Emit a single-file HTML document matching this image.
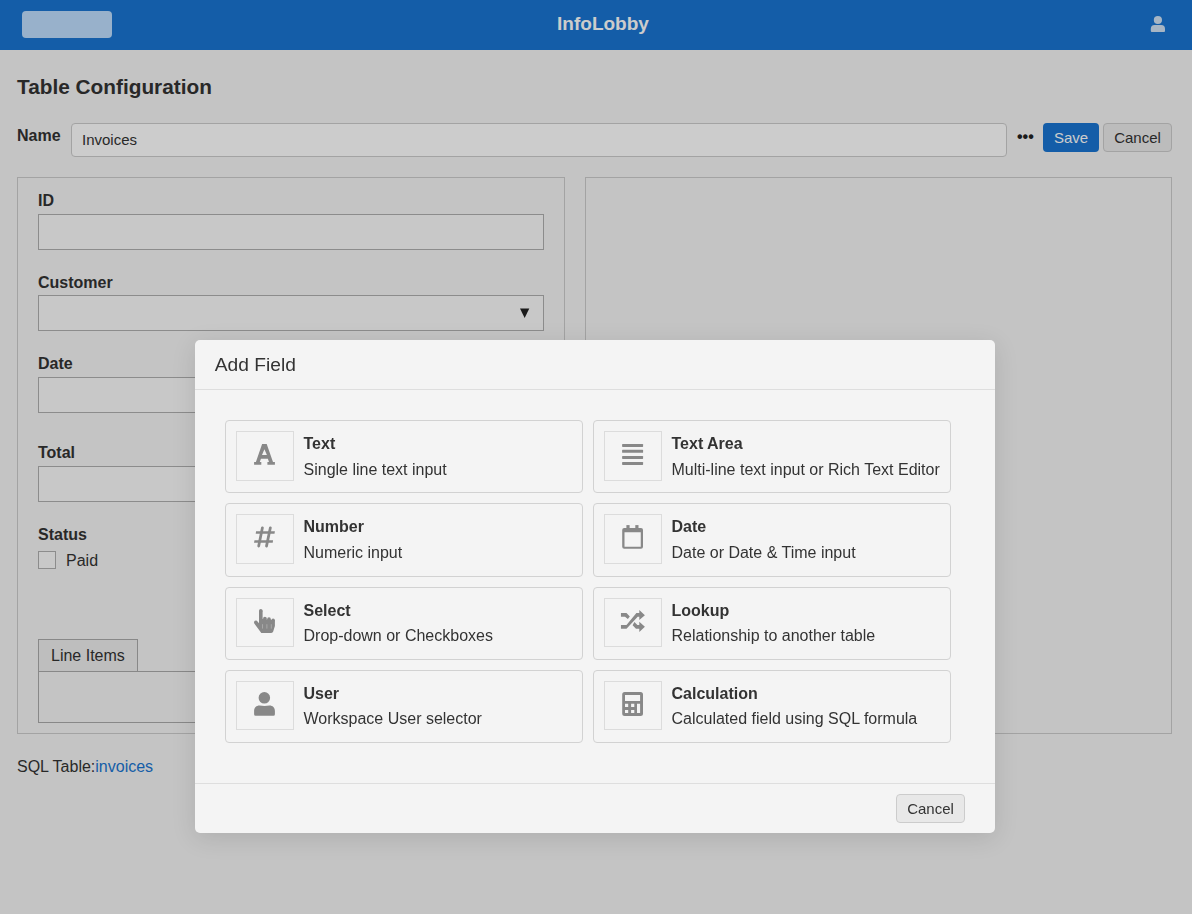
<!DOCTYPE html>
<html><head><meta charset="utf-8">
<style>
*{box-sizing:border-box;}
html,body{margin:0;padding:0;width:1192px;height:914px;overflow:hidden;}
body{font-family:"Liberation Sans",sans-serif;color:#333;background:#f5f5f5;position:relative;font-size:16px;}
.abs{position:absolute;}
#hdr{left:0;top:0;width:1192px;height:50px;background:#1975d2;}
#logo{left:22px;top:11px;width:90px;height:27px;border-radius:4px;background:#bedefe;}
#brand{left:0;top:0;width:1206px;text-align:center;line-height:47px;font-size:19px;font-weight:bold;color:#fff;}
#usr{left:1150px;top:15px;}
h1{position:absolute;left:17px;top:75px;margin:0;font-size:20.8px;font-weight:bold;line-height:24px;color:#333;}
.lbl{position:absolute;font-weight:bold;font-size:16px;line-height:18px;color:#333;}
.inp{position:absolute;border:1px solid #b0b0b0;background:#fbfbfb;}
#name{left:71px;top:123px;width:936px;height:34px;border-radius:4px;border-color:#ccc;background:#fff;}
#name span{position:absolute;left:10px;top:7px;font-size:15px;color:#333;}
#dots{left:1017px;top:128px;font-size:16px;font-weight:bold;color:#222;}
#save{left:1043px;top:123px;width:56px;height:29px;border-radius:4px;background:#1975d2;color:#fff;font-size:15px;text-align:center;line-height:29px;}
#cancel1{left:1103px;top:123px;width:69px;height:29px;border-radius:4px;background:#ebebeb;border:1px solid #ccc;color:#333;font-size:15px;text-align:center;line-height:27px;}
.panel{position:absolute;border:1px solid #ccc;}
#overlay{left:0;top:0;width:1192px;height:914px;background:rgba(0,0,0,0.2);}
#modal{will-change:transform;left:195px;top:340px;width:800px;height:493px;background:#f4f4f4;border-radius:5px;box-shadow:0 5px 24px rgba(0,0,0,.115);}
#mtitle{left:19.8px;top:14px;font-size:19.2px;line-height:22px;color:#333;}
#mhr1{left:0;top:49px;width:800px;height:1px;background:#dedede;}
#mhr2{left:0;top:443px;width:800px;height:1px;background:#dedede;}
.card{position:absolute;width:358px;height:73px;border:1px solid #d2d2d2;border-radius:4px;}
.ibox{position:absolute;left:10px;top:10px;width:58px;height:50px;border:1px solid #dcdcdc;}
.ibox svg{position:absolute;left:0;top:0;}
.ct{position:absolute;left:77.5px;top:14px;font-weight:bold;font-size:16px;line-height:18px;color:#333;}
.cd{position:absolute;left:77.5px;top:40px;font-size:16px;line-height:18px;color:#333;}
#mcancel{left:701px;top:454px;width:69px;height:29px;border-radius:4px;background:#e8e8e8;border:1px solid #ccc;font-size:15px;text-align:center;line-height:27px;color:#333;}
</style></head><body>
<div id="hdr" class="abs">
  <div id="logo" class="abs"></div>
  <div id="brand" class="abs">InfoLobby</div>
  <svg id="usr" class="abs" style="left:0;top:0" width="1192" height="50" viewBox="0 0 1192 50"><g fill="rgba(255,255,255,0.8)"><circle cx="1157.9" cy="20" r="4.1"/><path d="M1150.8,31 L1150.8,28.8 Q1150.8,24.9 1154.6,24.9 L1161.2,24.9 Q1165,24.9 1165,28.8 L1165,31 Q1165,32 1164,32 L1151.8,32 Q1150.8,32 1150.8,31 Z"/></g></svg>
</div>
<h1>Table Configuration</h1>
<div class="lbl" style="left:17px;top:127px;">Name</div>
<div id="name" class="inp"><span>Invoices</span></div>
<div id="dots" class="abs">&bull;&bull;&bull;</div>
<div id="save" class="abs">Save</div>
<div id="cancel1" class="abs">Cancel</div>

<div class="panel" style="left:17px;top:177px;width:548px;height:557px;">
</div>
<div class="panel" style="left:585px;top:177px;width:587px;height:557px;"></div>

<div class="lbl" style="left:38px;top:192px;">ID</div>
<div class="inp" style="left:38px;top:214px;width:506px;height:36px;"></div>
<div class="lbl" style="left:38px;top:274px;">Customer</div>
<div class="inp" style="left:38px;top:295px;width:506px;height:36px;"><svg class="abs" style="left:-1px;top:-1px;" width="506" height="36" viewBox="38 295 506 36"><path d="M520,308.6 L529.3,308.6 L524.65,318 Z" fill="#222"/></svg></div>
<div class="lbl" style="left:38px;top:355px;">Date</div>
<div class="inp" style="left:38px;top:377px;width:506px;height:36px;"></div>
<div class="lbl" style="left:38px;top:444px;">Total</div>
<div class="inp" style="left:38px;top:466px;width:506px;height:36px;"></div>
<div class="lbl" style="left:38px;top:526px;">Status</div>
<div class="inp" style="left:38px;top:551px;width:18px;height:18px;"></div>
<div class="abs" style="left:66px;top:552px;font-size:16px;line-height:18px;">Paid</div>
<div class="abs" style="left:38px;top:639px;width:100px;height:33px;border:1px solid #aaa;border-bottom:none;background:#eee;"><span class="abs" style="left:12px;top:7px;font-size:16px;line-height:18px;">Line Items</span></div>
<div class="abs" style="left:38px;top:671px;width:506px;height:52px;border:1px solid #aaa;"></div>
<div class="abs" style="left:17px;top:758px;font-size:16px;line-height:18px;">SQL Table:<span style="color:#1975d2">invoices</span></div>

<div id="overlay" class="abs"></div>

<div id="modal" class="abs">
  <div id="mtitle" class="abs">Add Field</div>
  <div id="mhr1" class="abs"></div>
  <div class="card" style="left:30px;top:80px;height:73px;"><div class="ibox" style="height:50px;"><svg width="58" height="50" viewBox="0 0 58 50" style="left:-1px;top:-1px;overflow:visible"><path fill="#888" fill-rule="evenodd" d="M26.1,12.9 L30.7,12.9 L37.0,31.0 L38.9,31.0 L38.9,33.8 L31.4,33.8 L31.4,31.0 L33.0,31.0 L31.87,27.7 L24.93,27.7 L23.8,31.0 L25.3,31.0 L25.3,33.8 L18.1,33.8 L18.1,31.0 L19.9,31.0 Z M28.4,18.3 L30.9,23.9 L26.0,23.9 Z"/></svg></div><div class="ct">Text</div><div class="cd">Single line text input</div></div>
  <div class="card" style="left:398px;top:80px;height:73px;"><div class="ibox" style="height:50px;"><svg width="58" height="50" viewBox="0 0 58 50" style="left:-1px;top:-1px;overflow:visible"><g fill="#888"><rect x="18.1" y="12.9" width="21" height="3" rx="0.6"/><rect x="18.1" y="18.85" width="21" height="3" rx="0.6"/><rect x="18.1" y="24.9" width="21" height="3" rx="0.6"/><rect x="18.1" y="30.9" width="21" height="3" rx="0.6"/></g></svg></div><div class="ct">Text Area</div><div class="cd">Multi-line text input or Rich Text Editor</div></div>
  <div class="card" style="left:30px;top:163px;height:74px;"><div class="ibox" style="height:50px;"><svg width="58" height="50" viewBox="0 0 58 50" style="left:-1px;top:-1px;overflow:visible"><g fill="#888"><path d="M20.1,17.2 L38.9,17.2 L38.5,19.65 L19.7,19.65 Z M18.5,26.2 L37.1,26.2 L36.7,28.7 L18.0,28.7 Z"/><path d="M26.4,13.8 L22.7,32.1 M34.35,13.8 L30.5,32.1" stroke="#888" stroke-width="2.75" stroke-linecap="round"/></g></svg></div><div class="ct">Number</div><div class="cd">Numeric input</div></div>
  <div class="card" style="left:398px;top:163px;height:74px;"><div class="ibox" style="height:50px;"><svg width="58" height="50" viewBox="0 0 58 50" style="left:-1px;top:-1px;overflow:visible"><g fill="#888"><path fill-rule="evenodd" d="M20.2,14.1 L37,14.1 Q39,14.1 39,16.1 L39,32.75 Q39,34.75 37,34.75 L20.2,34.75 Q18.2,34.75 18.2,32.75 L18.2,16.1 Q18.2,14.1 20.2,14.1 Z M20.5,18.2 L36.75,18.2 L36.75,32.65 L20.5,32.65 Z"/><rect x="22.4" y="11.1" width="3.2" height="3.5"/><rect x="31.3" y="11.1" width="3.2" height="3.5"/></g></svg></div><div class="ct">Date</div><div class="cd">Date or Date &amp; Time input</div></div>
  <div class="card" style="left:30px;top:247px;height:73px;"><div class="ibox" style="height:49px;"><svg width="58" height="50" viewBox="0 0 58 50" style="left:-1px;top:-1px;overflow:visible"><g fill="#888"><circle cx="24.8" cy="12.75" r="1.8"/><rect x="23" y="12.7" width="3.6" height="14"/><circle cx="28.9" cy="20.5" r="1.85"/><circle cx="33.0" cy="21.15" r="1.85"/><circle cx="37.15" cy="22.3" r="1.75"/><path d="M23,20.5 L38.9,22.3 L38.9,28 L37.2,33.5 Q36.8,34.9 35.2,34.9 L25.3,34.9 L18.3,25.5 A1.85,1.85 0 0 1 21.5,23.4 L23,25.3 Z"/><path d="M26.5,26.2 L26.5,30.6 M30.9,26.2 L30.9,30.6 M35.3,26.2 L35.3,30.6" stroke="#a8a8a8" stroke-width="1" fill="none"/></g></svg></div><div class="ct">Select</div><div class="cd" style="top:39px">Drop-down or Checkboxes</div></div>
  <div class="card" style="left:398px;top:247px;height:73px;"><div class="ibox" style="height:49px;"><svg width="58" height="50" viewBox="0 0 58 50" style="left:-1px;top:-1px;overflow:visible"><g fill="#888"><path d="M16.95,15.05 L22.5,15.05 L25.8,18.4 L23.85,21.1 L21.0,18.8 L16.95,18.8 Z"/><path d="M16.95,27.0 L22.5,27.0 L32.4,15.05 L35.3,15.05 L35.3,11.9 L40.9,17.2 L35.3,22.1 L35.3,18.8 L33.7,18.8 L22.5,30.8 L16.95,30.8 Z"/><path d="M30.4,24.1 L33.4,27.0 L35.3,27.0 L35.3,23.75 L40.9,28.7 L35.3,33.9 L35.3,30.8 L32.0,30.8 L28.6,27.2 Z"/></g></svg></div><div class="ct">Lookup</div><div class="cd" style="top:39px">Relationship to another table</div></div>
  <div class="card" style="left:30px;top:330px;height:73px;"><div class="ibox" style="height:49px;"><svg width="58" height="50" viewBox="0 0 58 50" style="left:-1px;top:-1px;overflow:visible"><g fill="#888"><circle cx="28.35" cy="16.85" r="5.75"/><path d="M18.1,33.2 L18.1,30 C18.1,26.5 20.3,24.4 23.5,24.4 Q26,24.6 28.5,25.1 Q31,24.6 33.5,24.4 C36.7,24.4 38.9,26.5 38.9,30 L38.9,33.2 Q38.9,34.7 37.4,34.7 L19.6,34.7 Q18.1,34.7 18.1,33.2 Z"/></g></svg></div><div class="ct">User</div><div class="cd" style="top:39px">Workspace User selector</div></div>
  <div class="card" style="left:398px;top:330px;height:73px;"><div class="ibox" style="height:49px;"><svg width="58" height="50" viewBox="0 0 58 50" style="left:-1px;top:-1px;overflow:visible"><g fill="#888"><path fill-rule="evenodd" d="M20.7,11.1 L36.5,11.1 Q39,11.1 39,13.6 L39,32.4 Q39,34.9 36.5,34.9 L20.7,34.9 Q18.2,34.9 18.2,32.4 L18.2,13.6 Q18.2,11.1 20.7,11.1 Z M21,14.1 L36.1,14.1 L36.1,20 L21,20 Z M21,22.8 L24.2,22.8 L24.2,26 L21,26 Z M27.1,22.8 L30.3,22.8 L30.3,26 L27.1,26 Z M21,28.9 L24.2,28.9 L24.2,32.05 L21,32.05 Z M27.1,28.9 L30.3,28.9 L30.3,32.05 L27.1,32.05 Z M33,22.8 L36.1,22.8 L36.1,32.05 L33,32.05 Z"/></g></svg></div><div class="ct">Calculation</div><div class="cd" style="top:39px">Calculated field using SQL formula</div></div>
  <div id="mhr2" class="abs"></div>
  <div id="mcancel" class="abs">Cancel</div>
</div>
</body></html>
